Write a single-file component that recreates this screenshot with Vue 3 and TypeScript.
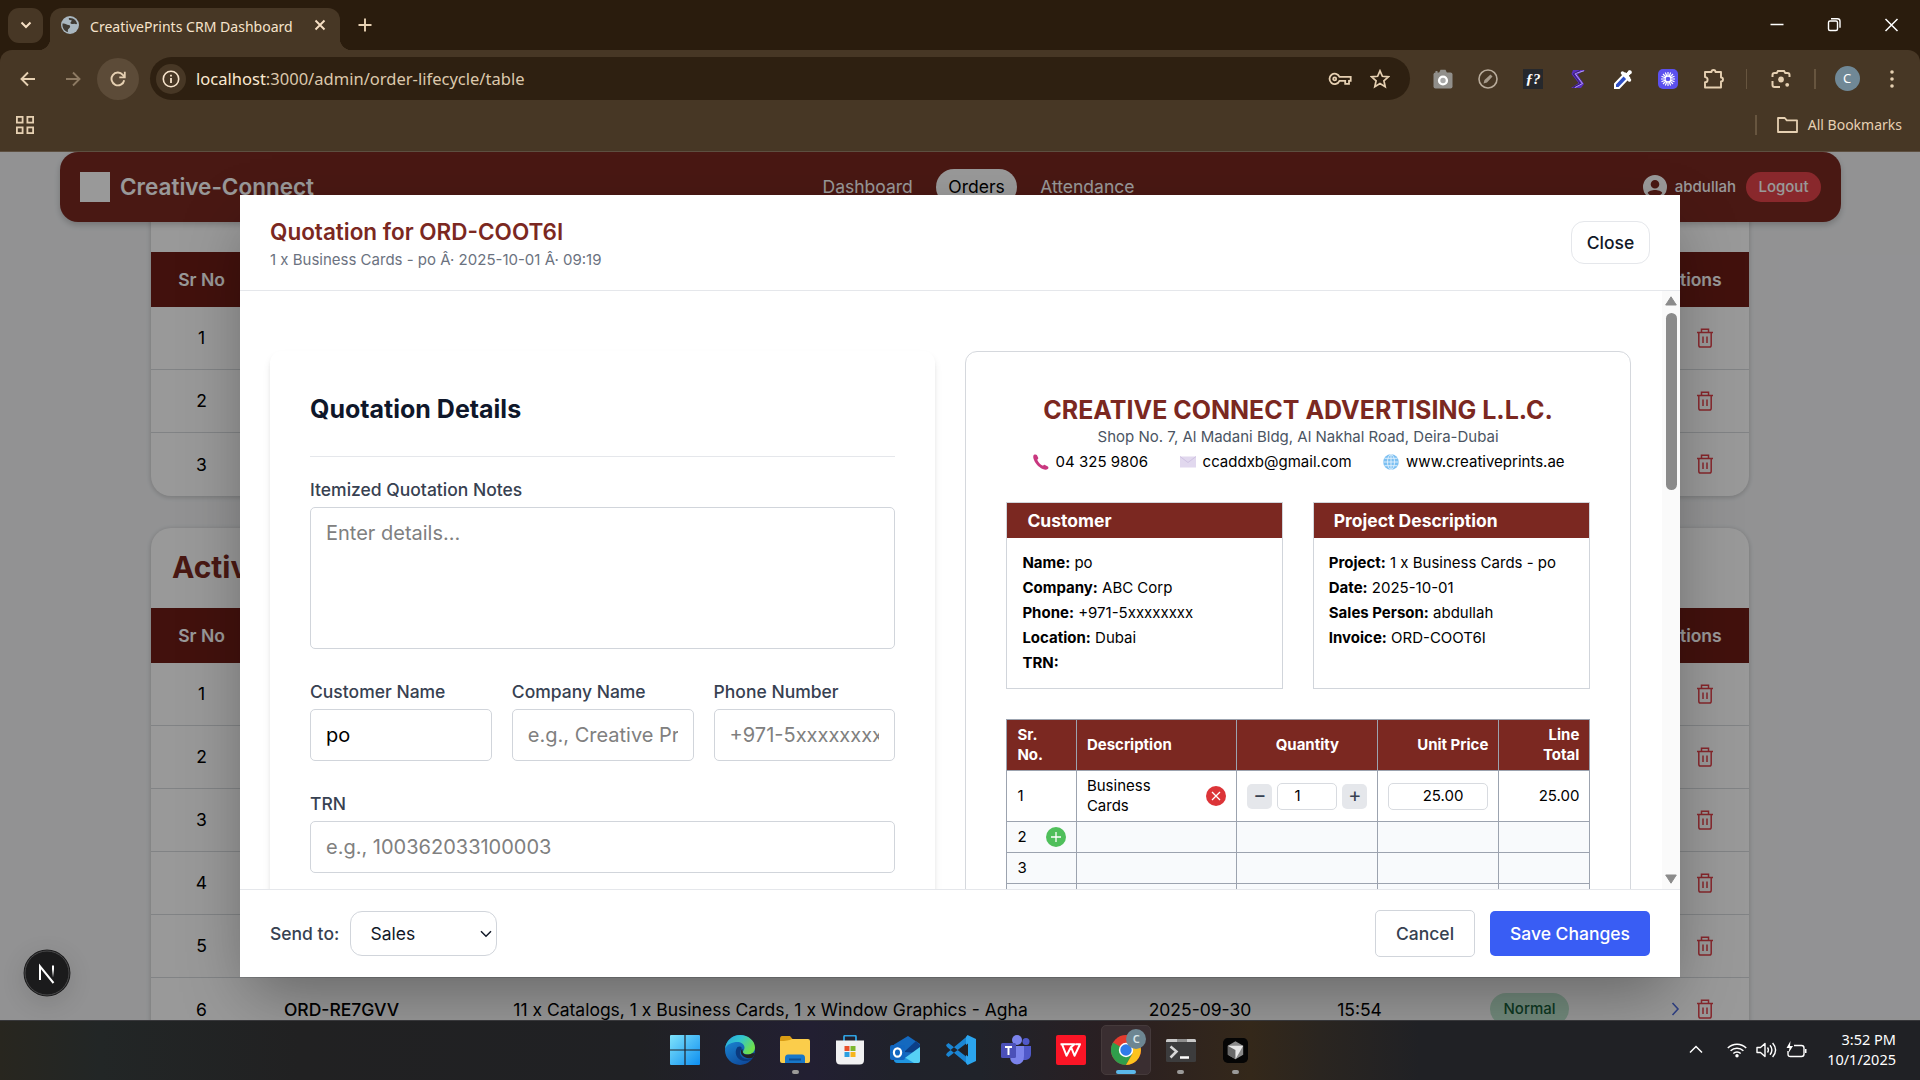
<script setup lang="ts">
interface OrderRow {
  no: number
  id?: string
  items?: string
  date?: string
  time?: string
  priority?: string
}

const recentRows: OrderRow[] = [{ no: 1 }, { no: 2 }, { no: 3 }]
const activeRows: OrderRow[] = [
  { no: 1 },
  { no: 2 },
  { no: 3 },
  { no: 4 },
  { no: 5 },
  {
    no: 6,
    id: 'ORD-RE7GVV',
    items: '11 x Catalogs, 1 x Business Cards, 1 x Window Graphics - Agha',
    date: '2025-09-30',
    time: '15:54',
    priority: 'Normal',
  },
]
const sections = [
  { title: 'Custom Orders', cls: 'recent', rows: recentRows },
  { title: 'Active Orders', cls: 'active', rows: activeRows },
]

const customer = [
  ['Name:', 'po'],
  ['Company:', 'ABC Corp'],
  ['Phone:', '+971-5xxxxxxxx'],
  ['Location:', 'Dubai'],
  ['TRN:', ''],
]
const project = [
  ['Project:', '1 x Business Cards - po'],
  ['Date:', '2025-10-01'],
  ['Sales Person:', 'abdullah'],
  ['Invoice:', 'ORD-COOT6I'],
]
const emptyRows = [2, 3, 4]
</script>

<template>
  <div class="screen">
    <!-- Browser chrome -->
    <div class="tabstrip">
      <div class="tab-search">
        <svg width="14" height="14" viewBox="0 0 14 14"><path d="M2.500 4.500 7 9l4.500-4.500" fill="none" stroke="#f6dfc4" stroke-width="2" /></svg>
      </div>
      <div class="tab">
        <svg width="18" height="18" viewBox="0 0 18 18">
          <circle cx="9" cy="9" r="9" fill="#aab7c0" />
          <path d="M1.500 7.500c3-.5 4 1.500 6 1.500s2 2 1 3-2 1-1.500 4C3.500 15.500 1 12 1.500 7.500zM8 2c-1 1.500 1 2.500 2 2s.5 2-.5 2.500 1.500 2 3 1.500 2 .5 3.500 0C16 5 13 1.500 8 2z" fill="#3f3a33" />
        </svg>
        <span class="tab-title">CreativePrints CRM Dashboard</span>
        <svg class="tab-x" width="12" height="12" viewBox="0 0 12 12"><path d="M1.500 1.500l9 9M10.500 1.500l-9 9" stroke="#f6dfc4" stroke-width="1.900" /></svg>
      </div>
      <svg class="newtab" width="14" height="14" viewBox="0 0 14 14"><path d="M7 .5v13M.5 7h13" stroke="#e8d2b4" stroke-width="1.900" /></svg>
      <div class="win-controls">
        <svg width="58" height="50" viewBox="0 0 58 50"><path d="M22.500 24.500h13" stroke="#fff" stroke-width="1.500" /></svg>
        <svg width="57" height="50" viewBox="0 0 57 50"><g fill="none" stroke="#fff" stroke-width="1.400"><rect x="22.500" y="21" width="9" height="9.500" rx="1.500" /><path d="M25 18.800h6.500q2.500 0 2.500 2.500v6.500" /></g></svg>
        <svg width="57" height="50" viewBox="0 0 57 50"><path d="M22.500 19l12 12M34.500 19l-12 12" stroke="#fff" stroke-width="1.500" /></svg>
      </div>
    </div>
    <div class="toolbar">
      <div class="nav-row">
        <div class="nav-slot back"><svg width="16" height="16" viewBox="0 0 16 16"><path d="M15 8H2M8 1.500 1.500 8 8 14.500" fill="none" stroke="#e6d0b2" stroke-width="1.900" /></svg></div>
        <div class="nav-slot"><svg width="16" height="16" viewBox="0 0 16 16"><path d="M1 8h13M8 1.500 14.500 8 8 14.500" fill="none" stroke="#8d7a63" stroke-width="1.900" /></svg></div>
        <div class="reload"><svg width="16" height="16" viewBox="0 0 16 16"><path d="M14.200 9.200A6.400 6.400 0 1 1 12.800 3.800L14.500 5.800" fill="none" stroke="#e6d0b2" stroke-width="1.900" /><path d="M14.800.8v5.500H9.300" fill="none" stroke="#e6d0b2" stroke-width="1.800" /></svg></div>
        <div class="omnibox">
          <div class="site-info"><svg width="18" height="18" viewBox="0 0 18 18"><circle cx="9" cy="9" r="7.700" fill="none" stroke="#f6e3cb" stroke-width="1.600" /><path d="M9 8v5M9 4.800v1.800" stroke="#f6e3cb" stroke-width="1.800" /></svg></div>
          <span class="url"><b>localhost</b>:3000/admin/order-lifecycle/table</span>
          <svg class="key" width="24" height="16" viewBox="0 0 24 16"><g fill="none" stroke="#e6d0b2" stroke-width="1.800"><path d="M11.500 5.800h11.200v4.100h-1.700v3h-3.800v-3h-5.700A5.200 5.200 0 1 1 11.500 5.800z" /><circle cx="6.700" cy="7.900" r="1.500" /></g></svg>
          <svg class="star" width="20" height="20" viewBox="0 0 20 20"><path d="M10 1.800l2.400 5.500 6 .5-4.500 4 1.300 5.900L10 14.600l-5.200 3.100 1.300-5.900-4.500-4 6-.5z" fill="none" stroke="#e6d0b2" stroke-width="1.700" /></svg>
        </div>
        <div class="exts">
          <div class="ext"><svg width="20" height="20" viewBox="0 0 20 20"><path d="M6 4 7.500.8h5L14 4zM2.500 2h2v2h-2z" fill="#918f8b" /><rect x=".5" y="3.500" width="19" height="16" rx="2" fill="#918f8b" /><circle cx="10" cy="11.500" r="3.900" fill="#aaa" stroke="#fff" stroke-width="2.400" /></svg></div>
          <div class="ext"><svg width="20" height="20" viewBox="0 0 20 20"><circle cx="10" cy="10" r="9" fill="none" stroke="#b8ab9b" stroke-width="1.600" /><path d="M5.500 14.500l1-3.500 6-5.500 2 2-5.500 6z" fill="#a69a8b" /></svg></div>
          <div class="ext"><div class="fq">ƒ?</div></div>
          <div class="ext"><svg width="18" height="20" viewBox="0 0 18 20"><path d="M16.500 1H4L2.500 5l7 9-7.500 5h10l3-4-6.500-9.500z" fill="#5a2fc0" /><path d="M15 1.800 6 4.500l7.500 10-7.500 4" fill="none" stroke="#b59cf5" stroke-width="1" /><path d="M11 1.500 4.300 4.800l7 9.700L4 18.300" fill="none" stroke="#2b1a52" stroke-width=".8" /></svg></div>
          <div class="ext"><svg width="20" height="20" viewBox="0 0 20 20"><path d="M12 4.500 2 15v4h4L16 8.500z" fill="#2f4fc6" stroke="#fff" stroke-width="2" /><path d="M9.500 4l7 7M14.500 5.500 17 3" stroke="#fff" stroke-width="3.500" stroke-linecap="round" /><path d="M10 5l4-1 2-3 3 3-3 2-1 4z" fill="#fff" /></svg></div>
          <div class="ext"><svg width="20" height="20" viewBox="0 0 20 20"><rect width="20" height="20" rx="5" fill="#5b50ee" /><g stroke="#fff" stroke-width="1.200"><path d="M10 3v14M3 10h14M5 5l10 10M15 5 5 15M7.300 3.500l5.400 13M12.700 3.500l-5.400 13M3.500 7.300l13 5.400M3.500 12.700l13-5.400" /></g><circle cx="10" cy="10" r="2.300" fill="#5b50ee" /></svg></div>
          <div class="ext"><svg width="22" height="22" viewBox="0 0 22 22"><path d="M3 4h6.500a2 2 0 1 1 4 0H19v5.500a2 2 0 1 1 0 4V19.500H3v-5.200a2.600 2.600 0 0 0 0-5.200z" fill="none" stroke="#e6d0b2" stroke-width="1.900" stroke-linejoin="round" /></svg></div>
        </div>
        <i class="vsep"></i>
        <div class="lens"><svg width="20" height="20" viewBox="0 0 20 20"><g fill="none" stroke="#e6d0b2" stroke-width="2"><path d="M1.500 8V6q0-2 2-2h2.200L7 2h6l1.300 2h2.200q2 0 2 2v2M1.500 12v4q0 2 2 2H9" /></g><circle cx="10" cy="10.500" r="2.900" fill="#e6d0b2" /><circle cx="16.200" cy="15.800" r="1.900" fill="#e6d0b2" /></svg></div>
        <i class="vsep"></i>
        <div class="avatar">C</div>
        <svg class="dots" width="6" height="20" viewBox="0 0 6 20"><g fill="#e6d0b2"><circle cx="3" cy="3" r="1.800" /><circle cx="3" cy="10" r="1.800" /><circle cx="3" cy="17" r="1.800" /></g></svg>
      </div>
      <div class="bm-row">
        <svg width="18" height="18" viewBox="0 0 18 18"><g fill="none" stroke="#e6d0b2" stroke-width="1.800"><rect x=".9" y=".9" width="5.700" height="5.700" /><rect x="11.400" y=".9" width="5.700" height="5.700" /><rect x=".9" y="11.400" width="5.700" height="5.700" /><rect x="11.400" y="11.400" width="5.700" height="5.700" /></g></svg>
        <div class="bm-right">
          <i class="vsep"></i>
          <svg width="21" height="16" viewBox="0 0 21 16"><path d="M1 1h6.800l2 2.300H20V15H1z" fill="none" stroke="#e6d0b2" stroke-width="1.800" stroke-linejoin="round" /></svg>
          <span>All Bookmarks</span>
        </div>
      </div>
    </div>

    <!-- Page -->
    <div class="page">
      <header class="site-head">
        <div class="brand"><i class="logo"></i><span>Creative-Connect</span></div>
        <nav class="links"><a>Dashboard</a><a class="on">Orders</a><a>Attendance</a></nav>
        <div class="user">
          <svg width="24" height="24" viewBox="0 0 24 24"><path fill-rule="evenodd" d="M12 0a12 12 0 1 0 0 24 12 12 0 0 0 0-24zm0 5a4.300 4.300 0 1 1 0 8.600A4.300 4.300 0 0 1 12 5zm0 16.500c-3 0-5.700-1.400-7.300-3.600.6-2 4.600-3 7.300-3s6.700 1 7.300 3A9 9 0 0 1 12 21.500z" fill="#fff" /></svg>
          <span class="uname">abdullah</span>
          <span class="logout">Logout</span>
        </div>
      </header>
      <main class="sections">
        <section v-for="s in sections" :key="s.title" class="panel" :class="s.cls">
          <h2>{{ s.title }}</h2>
          <div class="row head">
            <span>Sr No</span><span>Order ID</span><span>Description</span><span>Date</span><span>Time</span><span>Urgency</span><span>Actions</span>
          </div>
          <div v-for="r in s.rows" :key="r.no" class="row">
            <span>{{ r.no }}</span>
            <span class="oid">{{ r.id }}</span>
            <span>{{ r.items }}</span>
            <span>{{ r.date }}</span>
            <span>{{ r.time }}</span>
            <span><em v-if="r.priority" class="pill">{{ r.priority }}</em></span>
            <span class="acts">
              <svg width="20" height="20" viewBox="0 0 20 20"><path d="M7.500 4l5.500 6-5.500 6" fill="none" stroke="#4f6bdc" stroke-width="1.600" /></svg>
              <svg width="20" height="20" viewBox="0 0 20 20"><g fill="none" stroke="#e0414a" stroke-width="1.500"><path d="M2 4.500h16M6.500 4.500V1.200h7v3.300M3.800 4.500v12.700q0 1.800 1.700 1.800h9q1.700 0 1.700-1.800V4.500M8 8.500v6.500M12 8.500v6.500" /></g></svg>
            </span>
          </div>
        </section>
      </main>

      <div class="overlay">
        <div class="modal">
          <div class="m-head">
            <div>
              <h3>Quotation for ORD-COOT6I</h3>
              <p>1 x Business Cards - po Â· 2025-10-01 Â· 09:19</p>
            </div>
            <button class="close">Close</button>
          </div>
          <div class="m-body">
            <div class="cols">
              <div class="form">
                <h4>Quotation Details</h4>
                <label class="fl notes">Itemized Quotation Notes</label>
                <textarea placeholder="Enter details..."></textarea>
                <div class="three">
                  <div><label class="fl">Customer Name</label><input type="text" value="po" /></div>
                  <div><label class="fl">Company Name</label><input type="text" placeholder="e.g., Creative Prints" /></div>
                  <div><label class="fl">Phone Number</label><input type="text" placeholder="+971-5xxxxxxxx" /></div>
                </div>
                <label class="fl trn">TRN</label>
                <input type="text" placeholder="e.g., 100362033100003" />
              </div>

              <div class="preview">
                <h4>CREATIVE CONNECT ADVERTISING L.L.C.</h4>
                <p class="addr">Shop No. 7, Al Madani Bldg, Al Nakhal Road, Deira-Dubai</p>
                <div class="contacts">
                  <span><svg width="16" height="16" viewBox="0 0 16 16"><path d="M1 .8C2 .2 3.500.3 4 1.200l1.200 2.600c.3.800-.1 1.400-1 2 1 2.600 3 4.800 5.800 6 .7-.9 1.300-1.200 2-.8l2.800 1.600c.9.600.8 1.800-.1 2.500-1.300 1-3 .8-5-.1C5.300 13 1.500 8.500.4 4.200.1 2.700.2 1.500 1 .8z" fill="#c9377f" /></svg>04 325 9806</span>
                  <span><svg width="16" height="16" viewBox="0 0 16 16"><rect y="2.500" width="16" height="11" fill="#e1d8ee" /><path d="M0 2.500l8 6 8-6" fill="none" stroke="#cfc2e2" /></svg>ccaddxb@gmail.com</span>
                  <span><svg width="16" height="16" viewBox="0 0 16 16"><circle cx="8" cy="8" r="7.800" fill="#7cc0f2" /><g fill="none" stroke="#e3f2fd" stroke-width=".9"><ellipse cx="8" cy="8" rx="3.500" ry="7.400" /><path d="M8 .4v15.200M.4 8h15.200M1.500 4.300h13M1.500 11.700h13" /></g></svg>www.creativeprints.ae</span>
                </div>
                <div class="boxes">
                  <div class="box"><h5>Customer</h5><div class="kv"><p v-for="c in customer" :key="c[0]"><b>{{ c[0] }}</b> {{ c[1] }}</p></div></div>
                  <div class="box"><h5>Project Description</h5><div class="kv"><p v-for="c in project" :key="c[0]"><b>{{ c[0] }}</b> {{ c[1] }}</p></div></div>
                </div>
                <table>
                  <colgroup><col class="w1" /><col class="w2" /><col class="w3" /><col class="w4" /><col class="w5" /></colgroup>
                  <thead>
                    <tr><th>Sr.<br />No.</th><th>Description</th><th class="c">Quantity</th><th class="r">Unit Price</th><th class="r">Line<br />Total</th></tr>
                  </thead>
                  <tbody>
                    <tr class="first">
                      <td>1</td>
                      <td><div class="cell"><span>Business<br />Cards</span><svg width="20" height="20" viewBox="0 0 20 20"><circle cx="10" cy="10" r="10" fill="#dc3438" /><path d="M6 6l8 8M14 6l-8 8" stroke="#fff" stroke-width="1.300" /></svg></div></td>
                      <td><div class="qty"><i>−</i><span class="num">1</span><i>+</i></div></td>
                      <td><div class="price">25.00</div></td>
                      <td class="r">25.00</td>
                    </tr>
                    <tr v-for="n in emptyRows" :key="n" class="blank">
                      <td><div class="cell"><span>{{ n }}</span><svg v-if="n === 2" width="20" height="20" viewBox="0 0 20 20"><circle cx="10" cy="10" r="10" fill="#4fbf5b" /><path d="M10 5v10M5 10h10" stroke="#fff" stroke-width="1.300" /></svg></div></td>
                      <td></td><td></td><td></td><td></td>
                    </tr>
                  </tbody>
                </table>
              </div>
            </div>
            <div class="sbar">
              <svg width="14" height="10" viewBox="0 0 14 10"><path d="M7 .8 12.300 9H1.700z" fill="#8b8b8b" stroke="#8b8b8b" stroke-linejoin="round" /></svg>
              <i class="thumb"></i>
              <svg class="down" width="14" height="10" viewBox="0 0 14 10"><path d="M7 9.200 12.300 1H1.700z" fill="#8b8b8b" stroke="#8b8b8b" stroke-linejoin="round" /></svg>
            </div>
          </div>
          <div class="m-foot">
            <span class="send">Send to:</span>
            <div class="select"><span>Sales</span><svg width="12" height="8" viewBox="0 0 12 8"><path d="M1 1.200l5 5 5-5" fill="none" stroke="#111827" stroke-width="1.500" /></svg></div>
            <button class="cancel">Cancel</button>
            <button class="save">Save Changes</button>
          </div>
        </div>
      </div>

      <div class="devtool">
        <svg width="48" height="48" viewBox="0 0 48 48">
          <defs><linearGradient id="nx" x1="0" y1="0" x2="0" y2="1"><stop offset=".3" stop-color="#fff" /><stop offset="1" stop-color="#fff" stop-opacity="0" /></linearGradient></defs>
          <circle cx="24" cy="24" r="23.500" fill="#1b1b1c" /><circle cx="24" cy="24" r="22" fill="none" stroke="#4a4a4b" />
          <path d="M17 31V17.300L30.500 34" fill="none" stroke="#fff" stroke-width="2" /><rect x="29" y="16.500" width="2" height="12" fill="url(#nx)" />
        </svg>
      </div>
    </div>

    <!-- Windows taskbar -->
    <div class="taskbar">
      <div class="apps">
        <div class="app"><svg width="30" height="30" viewBox="0 0 30 30"><defs><linearGradient id="wn" x1="0" y1="0" x2="1" y2="1"><stop offset="0" stop-color="#7fe3fb" /><stop offset="1" stop-color="#0d8ef0" /></linearGradient></defs><path d="M1 0h13.400v14.400H0V1q0-1 1-1zM15.600 0H29q1 0 1 1v13.400H15.600zM0 15.600h14.400V30H1q-1 0-1-1zM15.600 15.600H30V29q0 1-1 1H15.600z" fill="url(#wn)" /></svg></div>
        <div class="app"><svg width="30" height="30" viewBox="0 0 30 30"><defs><linearGradient id="eg" x1="0" y1="0" x2="1" y2=".5"><stop offset="0" stop-color="#2aa5de" /><stop offset=".5" stop-color="#32c6cf" /><stop offset="1" stop-color="#6ee04c" /></linearGradient><linearGradient id="eb" x1="0" y1="0" x2=".6" y2="1"><stop offset="0" stop-color="#1c8fdc" /><stop offset="1" stop-color="#0f4b9c" /></linearGradient></defs><circle cx="15" cy="15" r="15" fill="url(#eb)" /><path d="M0 14C1 5 8 0 15 0c8 0 15 5.500 15 12.500 0 4-3 7-7 7-3 0-5-1-5-2.500s1.500-2 1.500-4.500c0-3-3-5.500-7-5.500C7 7 2 9 0 14z" fill="url(#eg)" /><path d="M12.500 12c-4 5-1 13 6 14 4 .5 7-.8 9.500-3-1 1-9 3-12-2-1.800-3-1-5 .5-6.500 1-3-1.500-3.800-4-2.500z" fill="#0b3a7e" /><path d="M28 22.500c-4 1.500-9 .5-11-2.500-2-2.800-1-5 .3-6.300l.7 4c1 2.300 6 2.600 9.500.5l2.500 0z" fill="#202125" /></svg></div>
        <div class="app dot"><svg width="30" height="30" viewBox="0 0 30 30"><path d="M0 4q0-3 2-3h8l3 3.500V12H0z" fill="#d99c14" /><path d="M0 6q8 0 12-2h16q2 0 2 2v20q0 2-2 2H2q-2 0-2-2z" fill="#fbcd4b" /><path d="M5 28v-5q0-3.500 3-3.500h14q3 0 3 3.500v5z" fill="#1877c9" /><path d="M9 24.500h12" stroke="#0d4f93" stroke-width="2" /></svg></div>
        <div class="app"><svg width="30" height="30" viewBox="0 0 30 30"><path d="M9 7V2q0-1.500 1.500-1.500h9Q21 .5 21 2v5" fill="none" stroke="#2fa0e0" stroke-width="1.800" /><path d="M1 5.500h28V25q0 4.500-4.500 4.500h-19Q1 29.500 1 25z" fill="#f1f1f2" /><path d="M9.500 11h5v5h-5z" fill="#e8502b" /><path d="M15.500 11h5v5h-5z" fill="#7db72f" /><path d="M9.500 17h5v5h-5z" fill="#2b9fe0" /><path d="M15.500 17h5v5h-5z" fill="#f7b51b" /></svg></div>
        <div class="app"><svg width="30" height="30" viewBox="0 0 30 30"><path d="M4 9.500 18 1l12 8v17q0 2-2 2H8q-4 0-4-3z" fill="#1469bf" /><path d="M14 17 26 6l4 4v8z" fill="#0c3f88" /><path d="M8 28 30 12v14q0 2-2 2z" fill="#56d0f5" /><path d="M4 16l20 12H8q-4 0-4-4z" fill="#2095df" /><rect y="10" width="15" height="15" rx="2" fill="#1166c0" /><ellipse cx="7.500" cy="17.500" rx="3.600" ry="4.200" fill="none" stroke="#fff" stroke-width="2.200" /></svg></div>
        <div class="app"><svg width="30" height="30" viewBox="0 0 30 30"><path d="M0 10l2.500-2L22 23v6.500L1 12zM0 20l2.500 2L22 7V.5L1 18z" fill="#1a86d4" /><path d="M21.500 0 30 4v22l-8.500 4L20 28V2z" fill="#2ba5ee" /><path d="M22 8.500v13L13.500 15z" fill="#202125" /></svg></div>
        <div class="app"><svg width="30" height="30" viewBox="0 0 30 30"><circle cx="25" cy="6.500" r="3.500" fill="#5059c9" /><path d="M20 11h10v8q0 5-5 6h-4z" fill="#5059c9" /><circle cx="16" cy="5" r="5" fill="#7b83eb" /><path d="M9 11h14v10q0 8-7 8.500-7-.5-7-8.500z" fill="#7b83eb" /><rect y="8" width="15" height="15" rx="1.500" fill="#4b50b8" /><path d="M4 12h7M7.500 12v8" stroke="#fff" stroke-width="2" /></svg></div>
        <div class="app"><svg width="30" height="30" viewBox="0 0 30 30"><rect width="30" height="30" rx="2" fill="#fb1526" /><path d="M4.500 9.200H12M6 9.200l4.500 11.500L15 12l3.500 8.700 5.500-11.500h-4.500M11 9.200h7.500l-3.500 3" fill="none" stroke="#fff" stroke-width="2" stroke-linejoin="round" /></svg></div>
        <div class="app current"><svg width="30" height="30" viewBox="0 0 30 30"><circle cx="15" cy="15" r="15" fill="#e33b2e" /><path d="M15 15 2 7.500A15 15 0 0 0 15 30l6.500-11.200z" fill="#2f9e4b" /><path d="M15 8h13.200A15 15 0 0 1 15 30l6.500-11.200z" fill="#fcc31e" /><circle cx="15" cy="15" r="7.200" fill="#fff" /><circle cx="15" cy="15" r="5.700" fill="#2f7be8" /></svg><b class="badge">C</b></div>
        <div class="app dot"><svg width="30" height="30" viewBox="0 0 30 30"><rect y="4" width="30" height="23" rx="1.500" fill="#3c3c3d" /><path d="M0 7V5.500Q0 4 1.500 4h27Q30 4 30 5.500V7z" fill="#c9c9c9" /><path d="M11 4h10v3H11z" fill="#8d8d8d" /><path d="M4.500 11.500l6 5-6 6" fill="none" stroke="#d8d8d8" stroke-width="2.500" /><path d="M14 22.500h9" stroke="#fff" stroke-width="2.500" /></svg></div>
        <div class="app dot"><svg width="25" height="25" viewBox="0 0 26 26"><rect width="26" height="26" rx="5" fill="#050505" /><path d="M13 3.500 21 8v9.500L13 22l-8-4.500V8z" fill="#8a8a8a" /><path d="M5 8l8 4.500V22l-8-4.500z" fill="#6a6a6a" /><path d="M5 8h16l-8 14v-9.500z" fill="#e6e6e6" /></svg></div>
      </div>
      <div class="tray">
        <svg width="14" height="9" viewBox="0 0 14 9"><path d="M1 7.500l6-6 6 6" fill="none" stroke="#fff" stroke-width="1.500" /></svg>
        <svg class="wifi" width="20" height="16" viewBox="0 0 20 16"><g fill="none" stroke="#fff" stroke-width="1.500"><path d="M.8 6a13 13 0 0 1 18.400 0M3.600 8.800a9 9 0 0 1 12.800 0M6.300 11.500a5.200 5.200 0 0 1 7.400 0" /></g><circle cx="10" cy="13.800" r="1.700" fill="#fff" /></svg>
        <svg class="vol" width="21" height="18" viewBox="0 0 21 18"><g fill="none" stroke="#fff" stroke-width="1.400"><path d="M1 6.500h3.500L9 2.500v13l-4.500-4H1z" stroke-linejoin="round" /><path d="M11.500 6.500q1.800 2.500 0 5M14 4.300q3.800 4.700 0 9.400M16.600 2q6 7 0 14" /></g></svg>
        <svg class="bat" width="21" height="18" viewBox="0 0 21 18"><path d="M8 4.500h7.500q2.500 0 2.500 2.500v6q0 2.500-2.500 2.500h-11Q2 15.500 2 13v-3" fill="none" stroke="#fff" stroke-width="1.400" /><path d="M19 8v4h1.500V8zM4.500 0 .5 7h3l-1 5 4.500-7H4z" fill="#fff" /></svg>
        <div class="clock"><span>3:52 PM</span><span>10/1/2025</span></div>
      </div>
    </div>
  </div>
</template>

<style>
html,
body {
  margin: 0;
  overflow: hidden;
}
</style>

<style scoped>
* { box-sizing: border-box; }
h2, h3, h4, h5, p { margin: 0; }
svg { display: block; flex: none; }
i { font-style: normal; }
.screen { width: 1920px; height: 1080px; display: flex; flex-direction: column; overflow: hidden; font-family: Inter, "Liberation Sans", sans-serif; background: #2a1c0d; }

.tabstrip { height: 50px; flex: none; display: flex; align-items: center; padding-left: 8px; background: #2a1c0d; font-family: "Noto Sans", sans-serif; }
.tab-search { width: 35px; height: 35px; border-radius: 11px; background: #473725; display: flex; align-items: center; justify-content: center; }
.tab { position: relative; width: 290px; height: 42px; margin: 8px 0 0 7px; padding: 0 14px 8px 11px; border-radius: 12px 12px 0 0; background: #473725; display: flex; align-items: center; }
.tab::before, .tab::after { content: ""; position: absolute; bottom: 0; width: 12px; height: 12px; background: radial-gradient(circle at 0 0, transparent 12px, #473725 12.500px); }
.tab::before { left: -12px; }
.tab::after { right: -12px; background: radial-gradient(circle at 100% 0, transparent 12px, #473725 12.500px); }
.tab-title { margin-left: 11px; font-size: 14.050px; color: #f6e3cb; white-space: nowrap; padding-top: 2px; }
.tab-x { margin-left: auto; }
.newtab { margin-left: 18px; }
.win-controls { margin-left: auto; display: flex; }
.toolbar { height: 102px; flex: none; background: #473725; border-radius: 12px 12px 0 0; border-bottom: 1px solid #5d4f40; font-family: "Noto Sans", sans-serif; display: flex; flex-direction: column; }
.nav-row { height: 57px; display: flex; align-items: center; padding-left: 5px; }
.nav-slot { width: 45px; display: flex; justify-content: center; }
.reload { width: 42px; height: 42px; margin-left: 2px; border-radius: 50%; background: #5c4b38; display: flex; align-items: center; justify-content: center; }
.omnibox { margin-left: 11px; width: 1260px; height: 43px; border-radius: 22px; background: #2e2011; display: flex; align-items: center; padding-left: 6px; }
.site-info { width: 30px; height: 30px; border-radius: 50%; background: #473725; display: flex; align-items: center; justify-content: center; }
.url { margin-left: 10px; font-size: 16.550px; color: #dcc8ac; white-space: nowrap; }
.url b { font-weight: 400; color: #fbe9d2; }
.key { margin-left: auto; }
.star { margin: 0 20px 0 18px; }
.exts { display: flex; margin-left: 10.500px; }
.ext { width: 45px; display: flex; justify-content: center; align-items: center; }
.fq { width: 20px; height: 20px; background: #26282c; color: #fff; font: italic 700 15px/20px "Liberation Serif", serif; text-align: center; }
.vsep { width: 1.500px; height: 20px; background: #67553f; margin-left: 10px; }
.lens { width: 67px; display: flex; justify-content: center; }
.lens + .vsep { margin-left: 0; }
.avatar { margin-left: 19px; width: 25px; height: 25px; border-radius: 50%; background: #708896; color: #fff; font-size: 13px; line-height: 25px; text-align: center; }
.dots { margin-left: 29px; }
.bm-row { height: 36px; display: flex; align-items: center; padding: 0 18px 1px 16px; }
.bm-right { margin-left: auto; display: flex; align-items: center; color: #e6d0b2; font-size: 14px; }
.bm-right svg { margin: 0 10px 0 20px; }

.page { position: relative; flex: 1; min-height: 0; overflow: hidden; background: #f3f4f6; }
.site-head { position: relative; z-index: 1; height: 69.500px; margin: 0 79px 0 60px; padding: 0 20px; border-radius: 18px; background: #7b2821; color: #fff; display: flex; align-items: center; justify-content: space-between; box-shadow: 0 3px 6px rgba(0,0,0,.2); }
.brand { width: 420px; display: flex; align-items: center; gap: 10px; font-size: 22.500px; font-weight: 600; }
.logo { width: 30px; height: 30px; background: #fff; }
.links { display: flex; align-items: center; gap: 23px; margin-left: 56px; font-size: 17.500px; }
.links a.on { height: 36px; line-height: 36px; padding: 0 12.500px; border-radius: 18px; background: #fff; color: #000; }
.user { width: 420px; display: flex; align-items: center; justify-content: flex-end; font-size: 15px; font-weight: 500; }
.uname { margin: 0 10px 0 8px; }
.logout { width: 75px; height: 30px; line-height: 30px; border-radius: 15px; background: #e5444a; text-align: center; }
.sections { margin: -50px 171px 0 151px; display: flex; flex-direction: column; gap: 32px; }
.panel { background: #fff; border-radius: 20px; overflow: hidden; box-shadow: 0 1px 4px 1px rgba(0,0,0,.15); }
.panel h2 { height: 80px; line-height: 79px; padding-left: 21px; font-size: 30px; font-weight: 700; color: #7b2821; }
.panel.recent h2 { line-height: 76px; }
.row { height: 63px; display: grid; grid-template-columns: 101px 179px 679px 180px 139px 201px 119px; align-items: center; text-align: center; font-size: 17.500px; color: #000; border-bottom: 1px solid #d8dade; white-space: nowrap; }
.row:last-child { border-bottom: 0; }
.row.head { height: 55px; background: #6f1d16; color: #fff; font-weight: 600; border: 0; }
.oid { font-weight: 500; }
.pill { display: inline-block; width: 79px; height: 32px; line-height: 32px; border-radius: 16px; background: #bfe6cf; color: #16603a; font-size: 15px; font-style: normal; font-weight: 500; }
.acts { display: flex; justify-content: center; gap: 10px; }

.overlay { position: absolute; inset: 0; z-index: 2; display: flex; justify-content: center; align-items: flex-start; padding-top: 43px; background: rgba(0,0,0,.4); }
.modal { width: 1440px; height: 782px; background: #fff; display: flex; flex-direction: column; box-shadow: 0 25px 62px -10px rgba(0,0,0,.35); }
.m-head { height: 96px; flex: none; border-bottom: 1px solid #e5e7eb; padding: 0 30px; display: flex; align-items: center; justify-content: space-between; }
.m-head h3 { padding-top: 4px; font-size: 22.500px; line-height: 30px; font-weight: 600; color: #7b2821; }
.m-head p { font-size: 15px; line-height: 25px; color: #6b7280; }
button { font-family: inherit; font-size: 17.500px; font-weight: 500; padding: 0; }
.close { width: 79px; height: 43px; border: 1px solid #e5e7eb; border-radius: 13px; background: #fff; color: #111827; }
.m-body { flex: 1; min-height: 0; overflow: hidden; display: flex; }
.cols { flex: 1; display: flex; gap: 30px; padding: 60px 31px 0 30px; align-items: flex-start; }
.form, .preview { width: 665.400px; height: 900px; flex: none; padding: 0 40px; }
.form { border-radius: 12px; box-shadow: 0 5px 8px -1px rgba(0,0,0,.1), 0 2px 5px -2px rgba(0,0,0,.1); }
.form h4 { height: 106px; border-bottom: 1px solid #e5e7eb; padding-top: 42px; line-height: 32px; font-size: 25px; font-weight: 700; color: #0f172a; }
.fl { display: block; font-size: 17.500px; line-height: 25px; font-weight: 500; color: #374151; }
.notes { margin-top: 20px; }
textarea, input { display: block; width: 100%; border: 1px solid #d1d5db; border-radius: 5px; padding: 10px 15px; font-family: inherit; font-size: 20px; line-height: 30px; color: #000; background: #fff; outline: 0; resize: none; }
textarea { height: 142px; margin-top: 5px; }
input { height: 52px; margin-top: 5px; }
::placeholder { color: #808080; opacity: 1; }
.three { display: grid; grid-template-columns: repeat(3, 1fr); gap: 20px; margin-top: 30px; }
.three > div { min-width: 0; }
.trn { margin-top: 30px; }
.preview { border: 1px solid #d5d8dd; border-radius: 12px; color: #000; }
.preview h4 { padding-top: 41px; line-height: 34px; font-size: 25px; font-weight: 700; color: #7b2821; text-align: center; white-space: nowrap; }
.addr { font-size: 15px; line-height: 20px; color: #4b5563; text-align: center; }
.contacts { margin: 5px 0 0 1px; display: flex; justify-content: center; gap: 31.500px; font-size: 15px; line-height: 20px; }
.contacts span { display: flex; align-items: center; gap: 7px; }
.boxes { display: grid; grid-template-columns: 277px 277px; justify-content: space-between; margin-top: 30px; }
.box { height: 187px; border: 1px solid #d1d5db; }
.box h5 { height: 35px; line-height: 35px; padding-left: 20px; background: #7b2821; color: #fff; font-size: 17.500px; font-weight: 700; }
.kv { padding: 12px 15px; font-size: 15px; line-height: 25px; }
.kv b { font-weight: 700; }
table { margin-top: 30px; width: 583px; table-layout: fixed; border-collapse: collapse; font-size: 15px; line-height: 20px; }
.w1 { width: 69.500px; }
.w2 { width: 160.500px; }
.w3 { width: 141px; }
.w4 { width: 121px; }
.w5 { width: 91px; }
th, td { border: 1px solid #9ca3af; padding: 0 10px; text-align: left; }
th { height: 51px; background: #7b2821; color: #fff; font-weight: 700; white-space: nowrap; }
.c { text-align: center; }
.r { text-align: right; }
.first td { height: 51px; }
.blank td { height: 31px; background: #f8fafc; }
.cell { display: flex; justify-content: space-between; align-items: center; }
.qty { display: flex; gap: 5px; align-items: center; }
.qty i { width: 25px; height: 25px; line-height: 23px; border-radius: 5px; background: #e5e7eb; color: #374151; text-align: center; font-size: 20px; }
.num { width: 60px; height: 27px; line-height: 24px; border: 1px solid #d8dbe0; border-radius: 5px; padding-left: 16px; }
.price { width: 100px; height: 27px; line-height: 24px; border: 1px solid #d8dbe0; border-radius: 5px; text-align: right; padding-right: 24px; }
.sbar { width: 18px; background: #fafafa; display: flex; flex-direction: column; align-items: center; padding: 5px 0 5px; }
.thumb { width: 11px; height: 177px; margin-top: 7px; border-radius: 6px; background: #8b8b8b; }
.down { margin-top: auto; }
.m-foot { height: 88px; flex: none; border-top: 1px solid #e5e7eb; display: flex; align-items: center; padding: 0 30px; }
.send { font-size: 17.500px; font-weight: 500; color: #374151; width: 79.500px; }
.select { width: 147px; height: 45px; border: 1px solid #d1d5db; border-radius: 12px; padding: 0 4px 0 20px; display: flex; align-items: center; justify-content: space-between; font-size: 17.500px; color: #111827; }
.cancel { margin-left: auto; width: 100px; height: 47px; border: 1px solid #d1d5db; border-radius: 5px; background: #fff; color: #374151; }
.save { margin-left: 15px; width: 160px; height: 45px; border: 0; border-radius: 5px; background: #395df4; color: #fff; }

.devtool { position: absolute; z-index: 3; left: 23px; top: 797px; border-radius: 50%; box-shadow: 0 6px 24px rgba(0,0,0,.12); }

.taskbar { position: relative; height: 60px; flex: none; border-top: 1px solid #37373a; display: flex; justify-content: space-between; background: linear-gradient(90deg, #28261f 0, #222626 100px, #212122 300px, #202124 640px, #221f32 810px, #20222a 900px, #20232a 980px, #2a1f22 1110px, #34281a 1250px, #2a2520 1320px, #202125 1420px); font-family: "Noto Sans", sans-serif; }
.apps { display: flex; margin-left: 657.500px; height: 58px; align-items: center; }
.app { position: relative; width: 55.100px; height: 50px; display: flex; align-items: center; justify-content: center; }
.app.dot::after, .app.current::after { content: ""; position: absolute; bottom: 1px; width: 7px; height: 4px; border-radius: 2px; background: #9b9a99; }
.app.current::after { width: 20px; background: #5bb8ea; }
.app.current::before { content: ""; position: absolute; inset: 0 2.500px; border: 1px solid #453a3b; border-radius: 5px; background: #3a2e31; }
.app svg { position: relative; }
.badge { position: absolute; left: 28px; top: 4px; width: 20px; height: 20px; border-radius: 50%; background: #6d8692; color: #dce6ea; font-size: 11px; line-height: 20px; text-align: center; font-weight: 600; }
.tray { height: 57px; display: flex; align-items: center; padding-right: 24px; }
.wifi { margin-left: 23.500px; }
.vol { margin-left: 9px; }
.bat { margin-left: 9px; }
.clock { width: 89.500px; padding-bottom: 2px; display: flex; flex-direction: column; align-items: flex-end; color: #fff; font-size: 14.500px; line-height: 20px; }
</style>
